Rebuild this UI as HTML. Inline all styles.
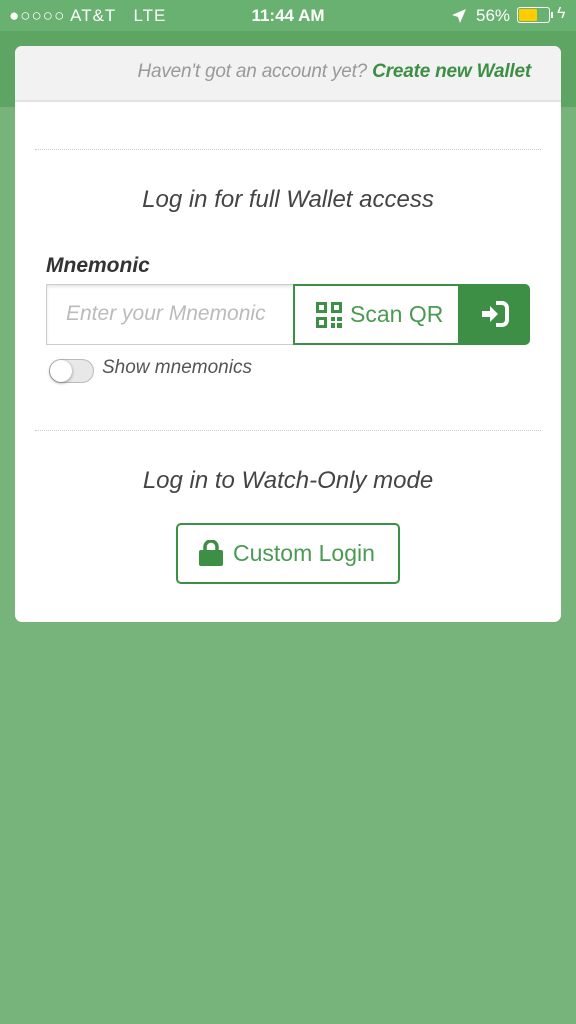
<!DOCTYPE html>
<html><head><meta charset="utf-8"><style>
*{margin:0;padding:0;box-sizing:border-box}
body{width:576px;height:1024px;background:#77b47b;font-family:"Liberation Sans",sans-serif;position:relative;overflow:hidden}
.sb{position:absolute;top:0;left:0;width:576px;height:31px;background:#69b171;color:#fff;font-size:17px}
.hd{position:absolute;top:31px;left:0;width:576px;height:76px;background:#5ea564}
.card{position:absolute;left:15px;top:46px;width:546px;height:576px;background:#fff;border-radius:7px;overflow:hidden}
.top{height:56px;background:#f2f2f2;border-bottom:2px solid #e2e2e2;text-align:right;padding:15px 30px 0 0;font-style:italic;font-size:19px;color:#999;letter-spacing:-0.2px}
.top b{color:#3d8f45}
.dot{position:absolute;left:20px;right:20px;border-top:1px dotted #ccc}
.c{position:absolute;left:0;width:100%;text-align:center;font-style:italic;font-size:24px;color:#444;font-weight:300}
</style></head><body>
<div class="sb">
<span style="position:absolute;left:9px;top:6px;letter-spacing:1px">●○○○○ AT&amp;T&nbsp;&nbsp; LTE</span>
<span style="position:absolute;left:0;width:576px;text-align:center;top:6px;font-weight:bold">11:44 AM</span>
<svg width="14" height="14" viewBox="0 0 14 14" style="position:absolute;left:452px;top:9px"><path d="M14 0L0 6l6 2 2 6z" fill="#fff"/></svg>
<span style="position:absolute;left:476px;top:6px">56%</span>
<span style="position:absolute;left:517px;top:7px;width:33px;height:16px;border:1px solid #fff;border-radius:3px"><span style="position:absolute;left:1px;top:1px;width:18px;height:12px;background:#ffcc00;border-radius:1px"></span></span>
<span style="position:absolute;left:551px;top:12px;width:2px;height:6px;background:#fff"></span>
<span style="position:absolute;left:557px;top:5px;font-size:16px">ϟ</span>
</div>
<div class="hd"></div>
<div class="card">
<div class="top">Haven't got an account yet? <b>Create new Wallet</b></div>
<div class="dot" style="top:103px"></div>
<div class="c" style="top:140px">Log in for full Wallet access</div>
<div style="position:absolute;left:31px;top:208px;font-weight:bold;font-style:italic;font-size:21px;color:#333">Mnemonic</div>
<div style="position:absolute;left:31px;top:238px;width:248px;height:61px;border:1px solid #ccc;border-right:none;box-shadow:inset 0 2px 3px rgba(0,0,0,.1);font-style:italic;font-size:21px;color:#bbb;padding:17px 0 0 19px;font-weight:300">Enter your Mnemonic</div>
<div style="position:absolute;left:278px;top:238px;width:167px;height:61px;border:2px solid #3d8f45;color:#4a9a52;font-size:23px;padding:15px 0 0 21px">
<svg width="26" height="26" viewBox="0 0 26 26" style="position:absolute;left:21px;top:16px"><g fill="#3d8f45"><path d="M0 0h11v11H0zM3 3v5h5V3zM15 0h11v11H15zM18 3v5h5V3zM0 15h11v11H0zM3 18v5h5v-5zM15 15h4v4h-4zM21 15h5v4h-5zM15 21h4v5h-4zM21 21h5v5h-5z"/></g></svg>
<span style="margin-left:34px">Scan QR</span></div>
<div style="position:absolute;left:445px;top:238px;width:70px;height:61px;background:#3d8f45;border-radius:0 5px 5px 0">
<svg width="30" height="26" viewBox="0 0 30 26" style="position:absolute;left:20px;top:17px"><path d="M2 10h8V5l8 8-8 8v-5H2z" fill="#fff"/><path d="M16 2h6a5 5 0 0 1 5 5v12a5 5 0 0 1-5 5h-6" stroke="#fff" stroke-width="4" fill="none"/></svg></div>
<div style="position:absolute;left:34px;top:313px;width:45px;height:24px;border-radius:12px;background:#e8e8e8;border:1px solid #bbb"><div style="position:absolute;left:0;top:0;width:22px;height:22px;border-radius:50%;background:#fff;box-shadow:0 1px 3px rgba(0,0,0,.4)"></div></div>
<div style="position:absolute;left:87px;top:311px;font-style:italic;font-size:19px;color:#555">Show mnemonics</div>
<div class="dot" style="top:384px"></div>
<div class="c" style="top:421px">Log in to Watch-Only mode</div>
<div style="position:absolute;left:161px;top:477px;width:224px;height:61px;border:2px solid #3d8f45;border-radius:5px;color:#4a9a52;font-size:23px;padding:15px 0 0 55px">
<svg width="24" height="26" viewBox="0 0 24 26" style="position:absolute;left:21px;top:15px"><path d="M6 11V7a6 6 0 0 1 12 0v4" stroke="#3d8f45" stroke-width="3.5" fill="none"/><rect x="0" y="10" width="24" height="16" rx="2" fill="#3d8f45"/></svg>
Custom Login</div>
</div>
</body></html>
